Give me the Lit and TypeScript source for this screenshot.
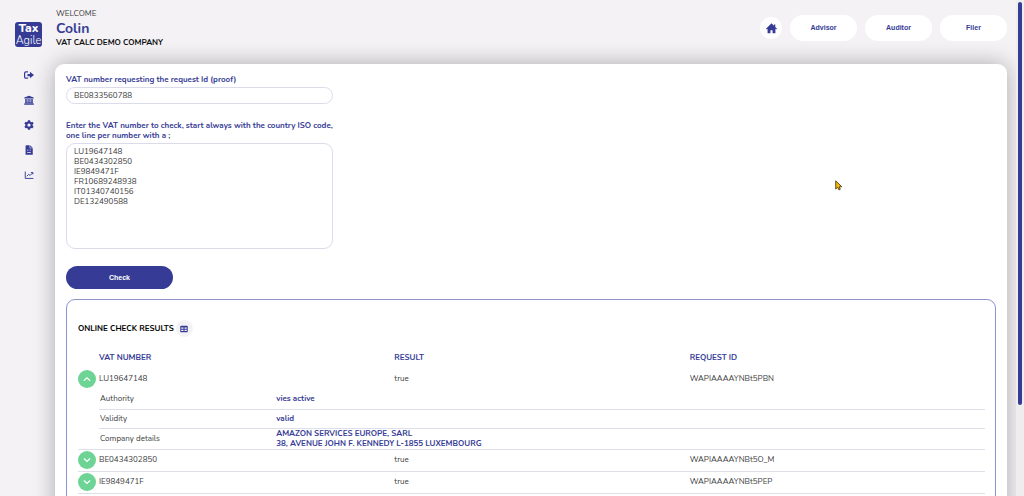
import { LitElement, html, css, svg, nothing } from "lit";
import { customElement, state } from "lit/decorators.js";

interface Detail {
  label: string;
  lines: string[];
}

interface Row {
  vat: string;
  result: string;
  id: string;
  details?: Detail[];
}

const ROWS: Row[] = [
  {
    vat: "LU19647148",
    result: "true",
    id: "WAPIAAAAYNBt5PBN",
    details: [
      { label: "Authority", lines: ["vies active"] },
      { label: "Validity", lines: ["valid"] },
      {
        label: "Company details",
        lines: ["AMAZON SERVICES EUROPE, SARL", "38, AVENUE JOHN F. KENNEDY L-1855 LUXEMBOURG"],
      },
    ],
  },
  { vat: "BE0434302850", result: "true", id: "WAPIAAAAYNBt5O_M" },
  { vat: "IE9849471F", result: "true", id: "WAPIAAAAYNBt5PEP" },
];

const NUMBERS = ["LU19647148", "BE0434302850", "IE9849471F", "FR10689248938", "IT01340740156", "DE132490588"];

const MENU = [
  {
    name: "Sign out",
    art: svg`<path d="M6.500 3H3a2 2 0 0 0-2 2v6a2 2 0 0 0 2 2h3.500" fill="none" stroke="currentColor" stroke-width="2"/><path d="M5.500 6.200h4V2.800l6.500 5.200-6.500 5.200V9.800h-4z" fill="currentColor"/>`,
  },
  {
    name: "Authorities",
    art: svg`<path d="M8 1l7.500 3v1.500H.5V4zM2 6.500h2.400V12h1.200V6.500h1.900V12h1V6.500h1.900V12h1.200V6.500H14V12l1 1H1l1-1zM.3 13.600h15.400V15.700H.3z" fill="currentColor"/>`,
  },
  {
    name: "Settings",
    art: svg`<path fill-rule="evenodd" d="M6.300.4h3.400l.4 2.100 1.600.9 2-.7 1.700 2.900-1.600 1.400v2l1.600 1.400-1.700 2.900-2-.7-1.600.9-.4 2.100H6.300l-.4-2.100-1.600-.9-2 .7L.6 10.400 2.200 9V7L.6 5.600l1.700-2.900 2 .7 1.600-.9zM8 5.400a2.600 2.600 0 1 0 0 5.200 2.600 2.600 0 0 0 0-5.200z" fill="currentColor"/>`,
  },
  {
    name: "Reports",
    art: svg`<path fill-rule="evenodd" d="M3.500.5H9V5h5v10.500H2.500v-14a1 1 0 0 1 1-1zM10 .5L14 4.200h-4zM5 7.500v1.300h2V7.500zm4 0v1.300h2V7.500zM5 11.500v1.300h6v-1.300z" fill="currentColor"/>`,
  },
  {
    name: "Statistics",
    art: svg`<path d="M2 2.500V13.500H15" fill="none" stroke="currentColor" stroke-width="1.500"/><path d="M4.500 10l3-3.200 2.300 2L14 4.500M11 4h3.200v3" fill="none" stroke="currentColor" stroke-width="1.500"/>`,
  },
];

@customElement("app-root")
export class AppRoot extends LitElement {
  @state() private open = new Set<string>(["LU19647148"]);

  static styles = css`
    :host {
      --ink: #363c96;
      --text: #3c3c3c;
      position: relative;
      display: grid;
      grid-template-columns: 55px minmax(0, 1fr) 17px;
      grid-template-rows: minmax(0, 1fr);
      height: 100vh;
      overflow: hidden;
      background: #f4f2f5;
      color: var(--text);
      font: 8px/10px "Nunito", "Noto Sans", sans-serif;
    }
    * { box-sizing: border-box; }
    button, input, textarea { font: inherit; color: inherit; }
    button { border: 0; padding: 0; cursor: pointer; }
    svg { display: block; }
    .side { display: flex; flex-direction: column; align-items: center; padding: 22px 0 0 2px; }
    .logo {
      display: flex;
      flex-direction: column;
      align-items: center;
      width: 27px;
      height: 25px;
      border-radius: 3px;
      background: var(--ink);
      color: #fff;
      white-space: nowrap;
    }
    .logo b { font-size: 12px; line-height: 13px; font-weight: 800; }
    .logo span { font-size: 11px; line-height: 11px; font-weight: 300; }
    .menu { display: flex; flex-direction: column; gap: 15px; padding-top: 23px; color: var(--ink); }
    .menu a { color: inherit; }
    .icon { width: 10px; height: 10px; }
    .main { display: flex; flex-direction: column; min-width: 0; }
    .head { display: flex; justify-content: space-between; flex: none; height: 64px; padding: 8px 0 0 1px; }
    .hello { padding-top: 1px; }
    .name { margin: 0; font-size: 14px; line-height: 19px; font-weight: 700; color: var(--ink); }
    .company { margin: 0; font-weight: 700; color: #111; }
    .roles { display: flex; align-items: center; gap: 8px; height: 40px; }
    .roles button { background: #fff; color: var(--ink); }
    .role { width: 67px; height: 26px; border-radius: 13px; font: bold 7px/10px "Liberation Sans", sans-serif; }
    .roles .home { display: grid; place-items: center; width: 22px; height: 22px; border-radius: 50%; }
    .card {
      flex: none;
      padding: 11px;
      background: #fff;
      border-radius: 9px;
      box-shadow: 0 0 22px rgba(0, 0, 0, 0.3);
    }
    .form { width: 267px; }
    .label { display: block; font-weight: 700; color: var(--ink); white-space: nowrap; }
    .field {
      display: block;
      width: 100%;
      border: 1px solid #dcdbea;
      background: #fff;
      outline: 0;
      padding: 0 7px;
    }
    .line { height: 17px; border-radius: 9px; margin: 2px 0 17px; }
    .area { height: 106px; border-radius: 9px; margin: 2px 0 17px; padding-top: 3px; resize: none; }
    .check {
      width: 107px;
      height: 23px;
      border-radius: 12px;
      background: var(--ink);
      color: #fff;
      font: bold 7px/10px "Liberation Sans", sans-serif;
    }
    .panel { margin-top: 10px; padding: 20px 10px 20px 11px; border: 1px solid #8f93cc; border-radius: 9px; }
    .title { display: flex; align-items: center; gap: 2px; height: 17px; margin-bottom: 10px; }
    .title h2 { margin: 0; font-size: 8px; line-height: 10px; font-weight: 700; color: #000; }
    .title button { display: grid; place-items: center; width: 17px; height: 17px; border-radius: 50%; background: #f4f2f5; color: var(--ink); }
    .grid { width: 100%; border-collapse: collapse; table-layout: fixed; }
    .grid th, .grid td { padding: 0; text-align: left; }
    .grid th { color: var(--ink); font-weight: 700; height: 21px; }
    .grid .toggle-col { width: 21px; }
    .row > td { height: 22px; border-bottom: 1px solid #dde0e8; }
    .row.open > td { border-bottom: 0; }
    .toggle { display: grid; place-items: center; width: 18px; height: 18px; border-radius: 50%; background: #6dd495; color: #fff; }
    .more > td { border-bottom: 1px solid #dde0e8; }
    .details { width: 100%; border-collapse: collapse; table-layout: fixed; }
    .grid .details th, .grid .details td { height: 19px; border-bottom: 1px solid #dde0e8; }
    .grid .details tr:last-child > * { border-bottom: 0; }
    .grid .details th { width: 20%; font-weight: 400; color: var(--text); padding-left: 1px; }
    .grid .details td { font-weight: 700; color: var(--ink); }
    .details td span { display: block; }
    .rail { padding: 2px 2px; display: flex; justify-content: flex-end; background: linear-gradient(to right, transparent 9px, #eee 9px); }
    .thumb { width: 4px; height: 82%; border-radius: 2px; background: var(--ink); }
    .pointer { position: absolute; left: 835px; top: 180px; }
  `;

  private flip(vat: string) {
    const next = new Set(this.open);
    if (!next.delete(vat)) next.add(vat);
    this.open = next;
  }

  private row(r: Row) {
    const open = this.open.has(r.vat) && !!r.details;
    return html`
      <tr class="row ${open ? "open" : ""}">
        <td>
          <button class="toggle" aria-label="Details of ${r.vat}" aria-expanded=${open} @click=${() => this.flip(r.vat)}>
            <svg width="8" height="8" viewBox="0 0 8 8" fill="none" stroke="currentColor" stroke-width="1.200" stroke-linecap="round">
              <path d=${open ? "M1.200 5.400L4 2.800l2.800 2.600" : "M1.200 2.800L4 5.400l2.800-2.600"} />
            </svg>
          </button>
        </td>
        <td>${r.vat}</td>
        <td>${r.result}</td>
        <td>${r.id}</td>
      </tr>
      ${open
        ? html`<tr class="more">
            <td></td>
            <td colspan="3">
              <table class="details">
                <tbody>
                  ${r.details!.map(
                    (d) => html`<tr>
                      <th scope="row">${d.label}</th>
                      <td>${d.lines.map((l) => html`<span>${l}</span>`)}</td>
                    </tr>`
                  )}
                </tbody>
              </table>
            </td>
          </tr>`
        : nothing}
    `;
  }

  render() {
    return html`
      <aside class="side">
        <div class="logo"><b>Tax</b><span>Agile</span></div>
        <nav class="menu">
          ${MENU.map(
            (m) => html`<a href="#" aria-label=${m.name}><svg class="icon" viewBox="0 0 16 16">${m.art}</svg></a>`
          )}
        </nav>
      </aside>
      <main class="main">
        <header class="head">
          <div class="hello">
            <div>WELCOME</div>
            <h1 class="name">Colin</h1>
            <p class="company">VAT CALC DEMO COMPANY</p>
          </div>
          <div class="roles">
            <button class="home" aria-label="Home">
              <svg width="11" height="11" viewBox="0 0 16 16"><path d="M8 .5L0 8.200l1 1.100 1.300-1V15h4.200v-4.500h3V15h4.200V8.300l1.300 1 1-1.100-2.500-2.300V2h-2v2z" fill="currentColor"/></svg>
            </button>
            <button class="role">Advisor</button>
            <button class="role">Auditor</button>
            <button class="role">Filer</button>
          </div>
        </header>
        <section class="card">
          <div class="form">
            <label class="label" for="requester">VAT number requesting the request Id (proof)</label>
            <input class="field line" id="requester" .value=${"BE0833560788"} />
            <label class="label" for="numbers">Enter the VAT number to check, start always with the country ISO code,<br />one line per number with a ;</label>
            <textarea class="field area" id="numbers" spellcheck="false" .value=${NUMBERS.join("\n")}></textarea>
            <button class="check">Check</button>
          </div>
          <div class="panel">
            <div class="title">
              <h2>ONLINE CHECK RESULTS</h2>
              <button aria-label="Export table">
                <svg width="8" height="8" viewBox="0 0 16 16"><path fill-rule="evenodd" d="M2 1.500h12a1.500 1.500 0 0 1 1.500 1.500v10a1.500 1.500 0 0 1-1.500 1.500H2A1.500 1.500 0 0 1 .5 13V3A1.500 1.500 0 0 1 2 1.500zM2.500 5v2.500H7V5zM9 5v2.500h4.500V5zM2.500 9.500V12H7V9.500zM9 9.500V12h4.500V9.500z" fill="currentColor"/></svg>
              </button>
            </div>
            <table class="grid">
              <colgroup><col class="toggle-col" /><col /><col /><col /></colgroup>
              <thead>
                <tr><td></td><th scope="col">VAT NUMBER</th><th scope="col">RESULT</th><th scope="col">REQUEST ID</th></tr>
              </thead>
              <tbody>${ROWS.map((r) => this.row(r))}</tbody>
            </table>
          </div>
        </section>
      </main>
      <div class="rail"><div class="thumb"></div></div>
      <svg class="pointer" width="8" height="11" viewBox="0 0 8 11">
        <path d="M.7.8v8.200l1.900-1.600 1.400 2.600 1.300-.7-1.100-2.500h2.600z" fill="#f5b800" stroke="#3a2c10" stroke-width=".8" />
      </svg>
    `;
  }
}
